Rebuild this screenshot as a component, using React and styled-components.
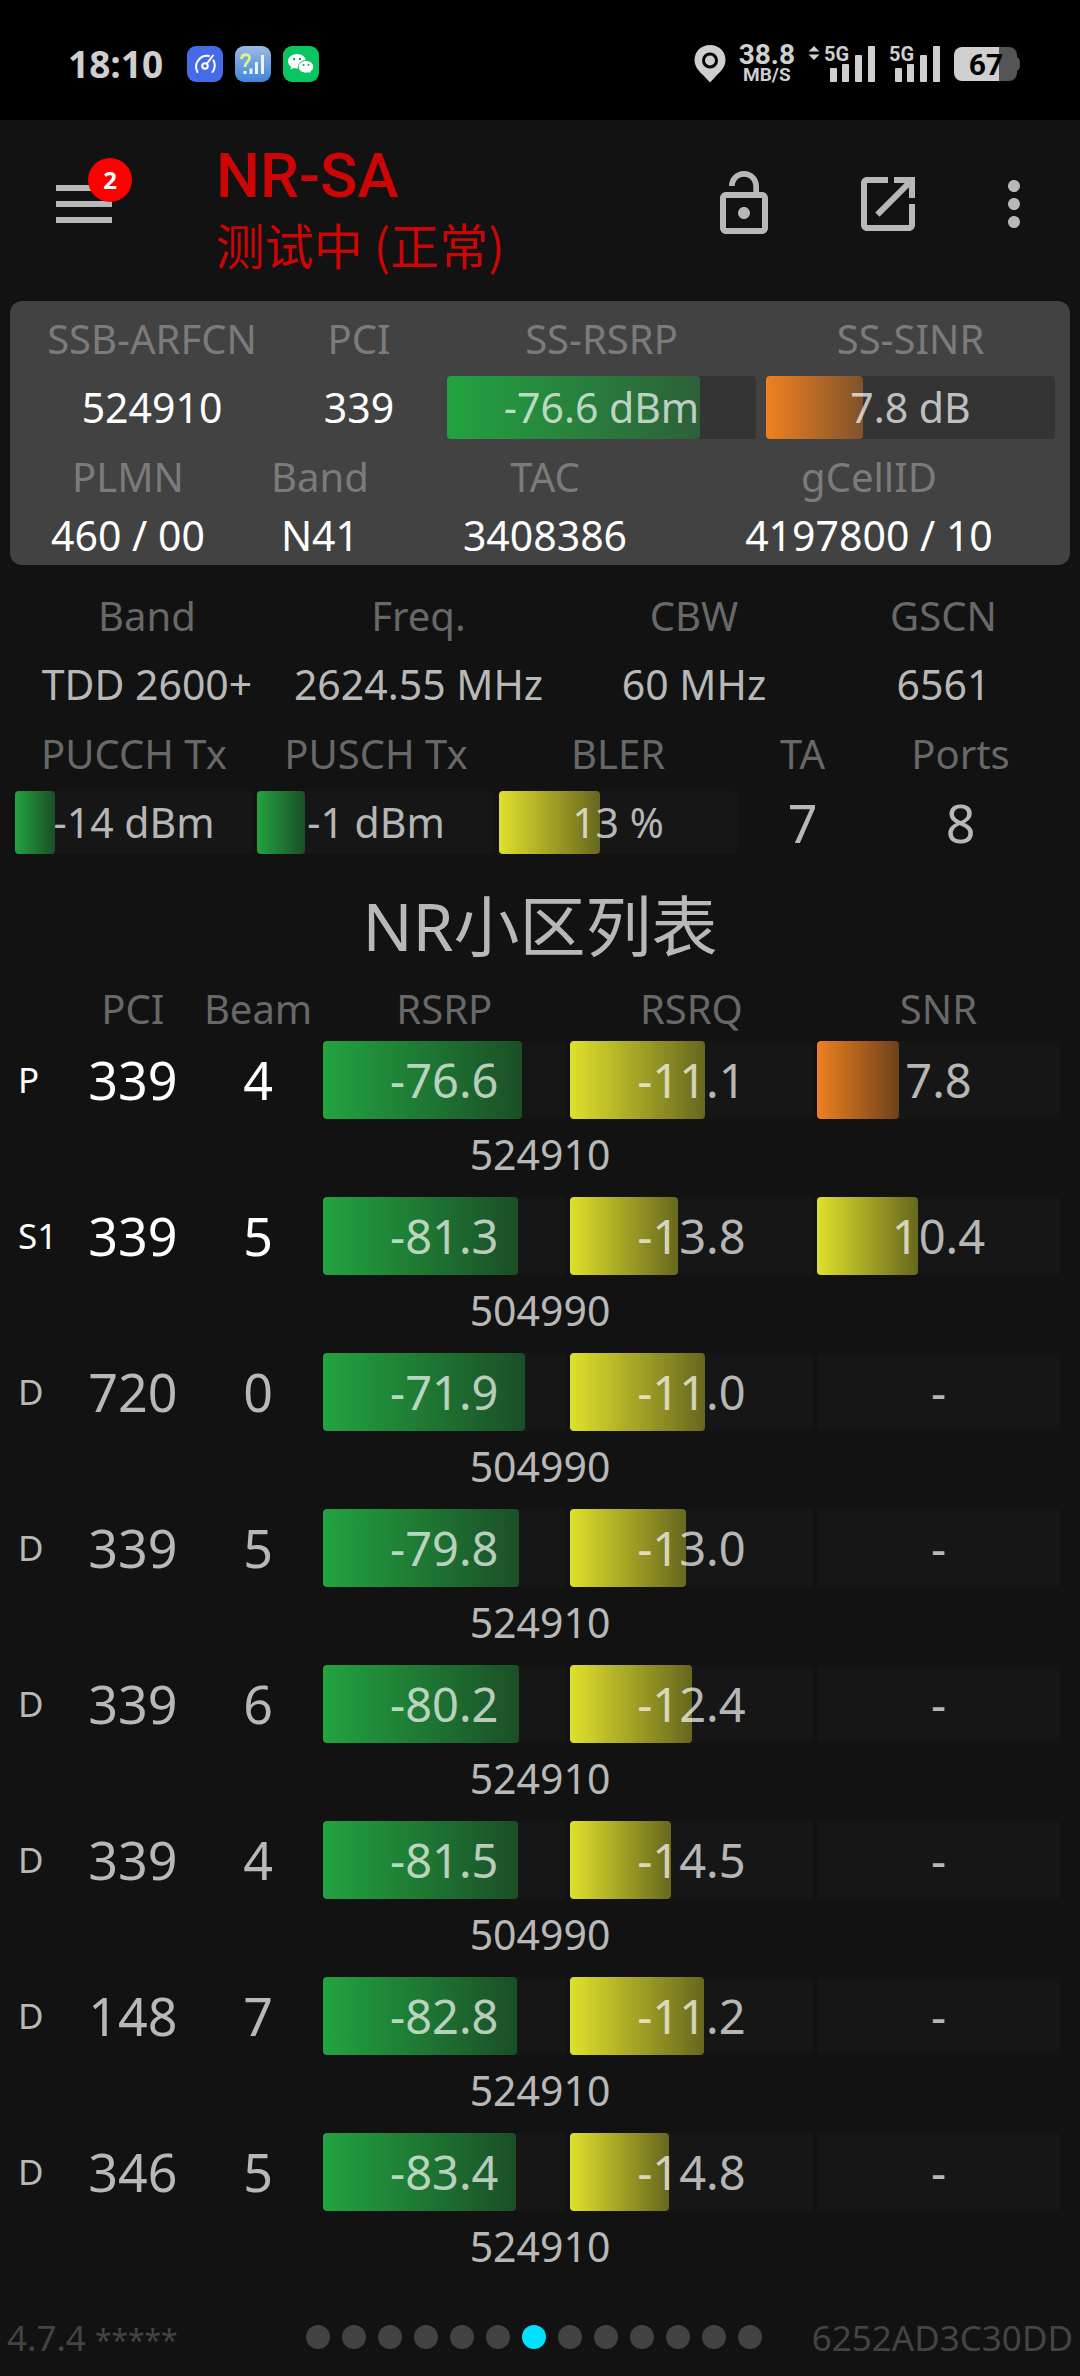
import React from 'react';
import styled, { createGlobalStyle } from 'styled-components';

const GlobalStyle = createGlobalStyle`
  * {
    box-sizing: border-box;
  }
  body {
    margin: 0;
    background: #121212;
    color: #b8b8b8;
    font-family: 'Noto Sans', 'Noto Sans CJK SC', sans-serif;
    font-size: 41px;
  }
`;

const Page = styled.div`
  display: flex;
  flex-direction: column;
  min-height: 100vh;
`;

// ---------- status bar ----------

const StatusBar = styled.div`
  display: flex;
  align-items: center;
  justify-content: space-between;
  height: 120px;
  padding: 8px 60px 0 68px;
  background: #000;
  color: #cfcfcf;
`;

const StatusGroup = styled.div`
  display: flex;
  align-items: center;
  gap: ${({ gap }) => gap};
`;

const Clock = styled.span`
  margin-right: 12px;
  font: 700 37px/48px 'Open Sans', sans-serif;
`;

const Speed = styled.div`
  display: flex;
  flex-direction: column;
  align-items: center;
  font-family: Roboto, sans-serif;
  font-weight: 700;
  font-size: 28px;
  line-height: 22px;
  small {
    font-size: 19px;
    line-height: 18px;
  }
`;

// ---------- app bar ----------

const AppBar = styled.header`
  display: flex;
  align-items: center;
  height: 168px;
  padding: 0 30px 0 56px;
`;

const IconButton = styled.button`
  position: relative;
  display: block;
  padding: 0;
  border: 0;
  background: none;
  color: #b8b8b8;
  svg {
    display: block;
  }
`;

const Badge = styled.span`
  position: absolute;
  top: -27px;
  left: 32px;
  width: 44px;
  border-radius: 50%;
  background: #ff0000;
  color: #fff;
  font: 700 24px/44px 'Open Sans', sans-serif;
  text-align: center;
`;

const Heading = styled.div`
  flex: 1;
  margin-left: 104px;
  padding-top: 8px;
  color: #cc0606;
  h1 {
    margin: 0;
    font: 500 62px/72px Roboto, sans-serif;
  }
  p {
    margin: 0;
    font: 400 49px/64px 'Noto Sans CJK SC', sans-serif;
  }
`;

const Actions = styled.div`
  display: flex;
  gap: 72px;
  button:last-child {
    margin-left: -18px;
  }
`;

// ---------- readings ----------

const Card = styled.section`
  margin: 13px 10px;
  padding: 0 10px 9px 18px;
  border-radius: 12px;
  background: #424242;
`;

const Section = styled.section`
  padding: 0 25px 0 13px;
`;

const Readings = styled.div`
  display: grid;
  grid-template-columns: ${({ columns }) => columns};
  text-align: center;
  white-space: nowrap;
`;

const Label = styled.div`
  height: 75px;
  color: ${({ $card }) => ($card ? '#7b7b7b' : '#686868')};
  font-size: 40px;
  line-height: 76px;
`;

const Value = styled.div`
  color: ${({ $bright }) => ($bright ? '#fff' : '#b8b8b8')};
  font-size: ${({ $large }) => ($large ? '52px' : '41px')};
  line-height: ${({ $tight }) => ($tight ? '42px' : '63px')};
`;

const fills = {
  green: '34, 163, 64',
  yellow: '224, 224, 44',
  orange: '240, 128, 32',
};

const Track = styled.div`
  display: grid;
  height: ${({ $tall }) => ($tall ? '78px' : '63px')};
  margin: 0 ${({ $card }) => ($card ? '5px' : '2px')};
  border-radius: 4px;
  background: ${({ $card }) => ($card ? '#343434' : '#161616')};
  color: rgba(255, 255, 255, 0.7);
  font-size: ${({ $tall }) => ($tall ? '47px' : '41px')};
  line-height: ${({ $tall }) => ($tall ? '78px' : '63px')};
  text-align: center;
  span,
  div {
    grid-area: 1 / 1;
  }
`;

const Fill = styled.div`
  border-radius: 4px;
  background: linear-gradient(
    to right,
    rgb(${({ color }) => fills[color]}),
    rgba(${({ color }) => fills[color]}, 0.4)
  );
`;

const Bar = ({ color, percent, children, ...rest }) => (
  <Track {...rest}>
    {percent && <Fill color={color} style={{ width: `${percent}%` }} />}
    <span>{children}</span>
  </Track>
);

// ---------- cell list ----------

const ListTitle = styled.h2`
  margin: 20px 0 0;
  font-size: 66px;
  font-weight: 400;
  line-height: 102px;
  text-align: center;
`;

const TableWrap = styled.div`
  padding: 0 18px;
`;

const CellTable = styled.table`
  width: 100%;
  border-collapse: collapse;
  table-layout: fixed;
  text-align: center;
  th,
  td {
    padding: 0;
    font-weight: 400;
  }
  thead th {
    height: 65px;
    color: #686868;
    font-size: 40px;
    line-height: 64px;
  }
`;

const SmallCol = styled.col`
  width: ${({ $width }) => $width};
`;

const CellRow = styled.tr`
  color: ${({ $bright }) => ($bright ? '#fff' : '#b8b8b8')};
  font-size: 52px;
  line-height: 78px;
  tbody & th {
    font-size: 35px;
    text-align: left;
  }
`;

const ArfcnCell = styled.td`
  && {
    padding-bottom: 8px;
  }
  line-height: 70px;
`;

// ---------- footer ----------

const Footer = styled.footer`
  display: grid;
  grid-template-columns: minmax(0, 298fr) auto minmax(0, 310fr);
  align-items: center;
  height: 78px;
  margin-top: auto;
  padding: 0 7px;
  color: #444;
  font-size: 35px;
  white-space: nowrap;
  > span:last-child {
    text-align: right;
  }
`;

const Stars = styled.span`
  font-size: 30px;
`;

const Dots = styled.div`
  display: flex;
  gap: 12px;
`;

const Dot = styled.i`
  width: 24px;
  height: 24px;
  border-radius: 50%;
  background: ${({ $active }) => ($active ? '#00e0ff' : '#424242')};
`;

// ---------- icons ----------

const SpeedIcon = () => (
  <svg width="36" height="36" viewBox="0 0 36 36" fill="none" stroke="#fff" strokeWidth="2" strokeLinecap="round">
    <rect width="36" height="36" rx="9" fill="#456be8" stroke="none" />
    <path d="M10.5 26A11 11 0 0 1 22 9.900M26.500 14.500A11 11 0 0 1 25.500 26" />
    <circle cx="18" cy="20" r="2.800" />
    <path d="M20 17.500L26 9.500" />
  </svg>
);

const SignalIcon = () => (
  <svg width="36" height="36" viewBox="0 0 36 36">
    <defs>
      <linearGradient id="sky" x1="0" y1="0" x2="0" y2="1">
        <stop offset="0" stopColor="#9db8e4" />
        <stop offset="1" stopColor="#3f86dc" />
      </linearGradient>
    </defs>
    <rect width="36" height="36" rx="9" fill="url(#sky)" />
    <path d="M6.500 13c0-5 8-6 8-1 0 4-4.500 4-4.500 9" fill="none" stroke="#d9f58a" strokeWidth="2.800" />
    <path d="M8.500 25h3v3h-3zM14.500 22.500h3V28h-3zM20 16h3v12h-3zM26 9h3v19h-3z" fill="#eaf6ff" />
  </svg>
);

const WechatIcon = () => (
  <svg width="36" height="36" viewBox="0 0 36 36">
    <rect width="36" height="36" rx="9" fill="#07c55f" />
    <path d="M14 8c-5 0-9 3.200-9 7.300 0 2.400 1.300 4.400 3.300 5.700l-.8 2.600 3-1.500c1.100.3 2.300.5 3.500.5 5 0 9-3.200 9-7.300S19 8 14 8z" fill="#fff" />
    <path d="M23 14.500c-4.300 0-7.700 2.800-7.700 6.300s3.400 6.300 7.700 6.300c.9 0 1.800-.1 2.600-.4l2.600 1.300-.6-2.300c2-1.200 3.100-2.900 3.100-4.900 0-3.500-3.400-6.300-7.700-6.300z" fill="#fff" stroke="#07c55f" />
    <g fill="#07a850">
      <circle cx="11" cy="13" r="1.200" />
      <circle cx="17" cy="13" r="1.200" />
      <circle cx="20.500" cy="19" r="1" />
      <circle cx="25.500" cy="19" r="1" />
    </g>
  </svg>
);

const PinIcon = () => (
  <svg width="32" height="38" viewBox="0 0 32 38">
    <path d="M16 0C7 0 .5 6.500.500 15c0 7 5 11.500 9 15.500l6.500 7 6.500-7c4-4 9-8.500 9-15.500C31.500 6.500 25 0 16 0z" fill="#cfcfcf" />
    <circle cx="16" cy="15.500" r="6.500" fill="none" stroke="#000" strokeWidth="3" />
  </svg>
);

const TrafficIcon = () => (
  <svg width="12" height="36" viewBox="0 0 12 36" fill="#cfcfcf">
    <path d="M6 0l5.500 5.500H.5zM.5 8.500h11L6 14z" />
  </svg>
);

const Signal5G = () => (
  <svg width="52" height="46" viewBox="0 -5 52 46" fill="#cfcfcf">
    <text x="0" y="15" fontFamily="Roboto, sans-serif" fontSize="20" fontWeight="700">5G</text>
    <rect x="6" y="22" width="7" height="14" rx="1" />
    <rect x="18" y="18" width="7" height="18" rx="1" />
    <rect x="31" y="9" width="7" height="27" rx="1" />
    <rect x="44" y="0" width="7" height="36" rx="1" />
  </svg>
);

const BatteryIcon = () => (
  <svg width="66" height="34" viewBox="0 0 66 34">
    <path d="M45 0h10a8 8 0 0 1 8 8v2q3 1 3 7t-3 7v2a8 8 0 0 1-8 8H45z" fill="#555" />
    <path d="M45 0H8a8 8 0 0 0-8 8v18a8 8 0 0 0 8 8h37z" fill="#cfcfcf" />
    <text x="32" y="28" textAnchor="middle" fontFamily="Roboto, sans-serif" fontSize="30" fontWeight="700" fill="#000">67</text>
  </svg>
);

const MenuIcon = () => (
  <svg width="56" height="38" viewBox="0 0 56 38" fill="currentColor">
    <path d="M0 0h56v6H0zM0 16h56v6H0zM0 32h56v6H0z" />
  </svg>
);

const ActionIcon = ({ d }) => (
  <svg width="72" height="72" viewBox="0 0 24 24" fill="currentColor">
    <path d={d} />
  </svg>
);

const icons = {
  unlock:
    'M12 17c1.100 0 2-.9 2-2s-.9-2-2-2-2 .9-2 2 .9 2 2 2zm6-9h-1V6c0-2.760-2.240-5-5-5S7 3.240 7 6h1.900c0-1.710 1.390-3.100 3.100-3.100 1.710 0 3.100 1.390 3.100 3.100v2H6c-1.100 0-2 .9-2 2v10c0 1.100.9 2 2 2h12c1.100 0 2-.9 2-2V10c0-1.100-.9-2-2-2zm0 12H6V10h12v10z',
  open:
    'M19 19H5V5h7V3H5c-1.110 0-2 .9-2 2v14c0 1.100.89 2 2 2h14c1.100 0 2-.9 2-2v-7h-2v7zM14 3v2h3.590l-9.830 9.830 1.410 1.410L19 6.410V10h2V3h-7z',
  more:
    'M12 8c1.100 0 2-.9 2-2s-.9-2-2-2-2 .9-2 2 .9 2 2 2zm0 2c-1.100 0-2 .9-2 2s.9 2 2 2 2-.9 2-2-.9-2-2-2zm0 6c-1.100 0-2 .9-2 2s.9 2 2 2 2-.9 2-2-.9-2-2-2z',
};

// ---------- data ----------

// rsrp, rsrq and snr are [text, fill percent, color]
const cells = [
  { type: 'P', pci: 339, beam: 4, rsrp: ['-76.6', 82], rsrq: ['-11.1', 55.5], snr: ['7.8', 33.6, 'orange'], arfcn: 524910 },
  { type: 'S1', pci: 339, beam: 5, rsrp: ['-81.3', 80.4], rsrq: ['-13.8', 44.6], snr: ['10.4', 41.4, 'yellow'], arfcn: 504990 },
  { type: 'D', pci: 720, beam: 0, rsrp: ['-71.9', 83.3], rsrq: ['-11.0', 55.8], snr: ['-'], arfcn: 504990 },
  { type: 'D', pci: 339, beam: 5, rsrp: ['-79.8', 80.8], rsrq: ['-13.0', 47.8], snr: ['-'], arfcn: 524910 },
  { type: 'D', pci: 339, beam: 6, rsrp: ['-80.2', 80.7], rsrq: ['-12.4', 50.2], snr: ['-'], arfcn: 524910 },
  { type: 'D', pci: 339, beam: 4, rsrp: ['-81.5', 80.3], rsrq: ['-14.5', 41.8], snr: ['-'], arfcn: 504990 },
  { type: 'D', pci: 148, beam: 7, rsrp: ['-82.8', 79.9], rsrq: ['-11.2', 55], snr: ['-'], arfcn: 524910 },
  { type: 'D', pci: 346, beam: 5, rsrp: ['-83.4', 79.7], rsrq: ['-14.8', 40.8], snr: ['-'], arfcn: 524910 },
];

const pageCount = 13;
const activePage = 6;

const App = () => {
  return (
    <Page>
      <GlobalStyle />

      <StatusBar>
        <StatusGroup gap="12px">
          <Clock>18:10</Clock>
          <SpeedIcon />
          <SignalIcon />
          <WechatIcon />
        </StatusGroup>
        <StatusGroup gap="13px">
          <PinIcon />
          <Speed>
            38.8
            <small>MB/S</small>
          </Speed>
          <StatusGroup gap="4px">
            <TrafficIcon />
            <Signal5G />
          </StatusGroup>
          <Signal5G />
          <BatteryIcon />
        </StatusGroup>
      </StatusBar>

      <AppBar>
        <IconButton aria-label="Menu">
          <MenuIcon />
          <Badge>2</Badge>
        </IconButton>
        <Heading>
          <h1>NR-SA</h1>
          <p>测试中 (正常)</p>
        </Heading>
        <Actions>
          <IconButton aria-label="Unlock"><ActionIcon d={icons.unlock} /></IconButton>
          <IconButton aria-label="Open"><ActionIcon d={icons.open} /></IconButton>
          <IconButton aria-label="More"><ActionIcon d={icons.more} /></IconButton>
        </Actions>
      </AppBar>

      <Card>
        <Readings columns="248fr 166fr 319fr 299fr">
          <Label $card>SSB-ARFCN</Label>
          <Label $card>PCI</Label>
          <Label $card>SS-RSRP</Label>
          <Label $card>SS-SINR</Label>
          <Value $bright>524910</Value>
          <Value $bright>339</Value>
          <Bar $card color="green" percent={82}>-76.6 dBm</Bar>
          <Bar $card color="orange" percent={33.6}>7.8 dB</Bar>
        </Readings>
        <Readings columns="200fr 184fr 266fr 382fr">
          <Label $card>PLMN</Label>
          <Label $card>Band</Label>
          <Label $card>TAC</Label>
          <Label $card>gCellID</Label>
          <Value $bright $tight>460 / 00</Value>
          <Value $bright $tight>N41</Value>
          <Value $bright $tight>3408386</Value>
          <Value $bright $tight>4197800 / 10</Value>
        </Readings>
      </Card>

      <Section>
        <Readings columns="268fr 275fr 276fr 223fr">
          <Label>Band</Label>
          <Label>Freq.</Label>
          <Label>CBW</Label>
          <Label>GSCN</Label>
          <Value>TDD 2600+</Value>
          <Value>2624.55 MHz</Value>
          <Value>60 MHz</Value>
          <Value>6561</Value>
        </Readings>
        <Readings columns="242fr 242fr 242fr 127fr 189fr">
          <Label>PUCCH Tx</Label>
          <Label>PUSCH Tx</Label>
          <Label>BLER</Label>
          <Label>TA</Label>
          <Label>Ports</Label>
          <Bar color="green" percent={17}>-14 dBm</Bar>
          <Bar color="green" percent={20}>-1 dBm</Bar>
          <Bar color="yellow" percent={42.5}>13 %</Bar>
          <Value $large>7</Value>
          <Value $large>8</Value>
        </Readings>
      </Section>

      <ListTitle>NR小区列表</ListTitle>
      <TableWrap>
        <CellTable>
          <colgroup>
            <SmallCol $width="5%" />
            <SmallCol $width="12%" />
            <SmallCol $width="12%" />
            <col />
            <col />
            <col />
          </colgroup>
          <thead>
            <tr>
              <th></th>
              <th>PCI</th>
              <th>Beam</th>
              <th>RSRP</th>
              <th>RSRQ</th>
              <th>SNR</th>
            </tr>
          </thead>
          <tbody>
            {cells.map((cell, i) => (
              <React.Fragment key={i}>
                <CellRow $bright={cell.type !== 'D'}>
                  <th scope="row">{cell.type}</th>
                  <td>{cell.pci}</td>
                  <td>{cell.beam}</td>
                  <td><Bar $tall color="green" percent={cell.rsrp[1]}>{cell.rsrp[0]}</Bar></td>
                  <td><Bar $tall color="yellow" percent={cell.rsrq[1]}>{cell.rsrq[0]}</Bar></td>
                  <td><Bar $tall color={cell.snr[2]} percent={cell.snr[1]}>{cell.snr[0]}</Bar></td>
                </CellRow>
                <tr>
                  <ArfcnCell colSpan={6}>{cell.arfcn}</ArfcnCell>
                </tr>
              </React.Fragment>
            ))}
          </tbody>
        </CellTable>
      </TableWrap>

      <Footer>
        <span>4.7.4 <Stars>*****</Stars></span>
        <Dots>
          {Array.from({ length: pageCount }, (_, i) => (
            <Dot key={i} $active={i === activePage} />
          ))}
        </Dots>
        <span>6252AD3C30DD</span>
      </Footer>
    </Page>
  );
};

export default App;
